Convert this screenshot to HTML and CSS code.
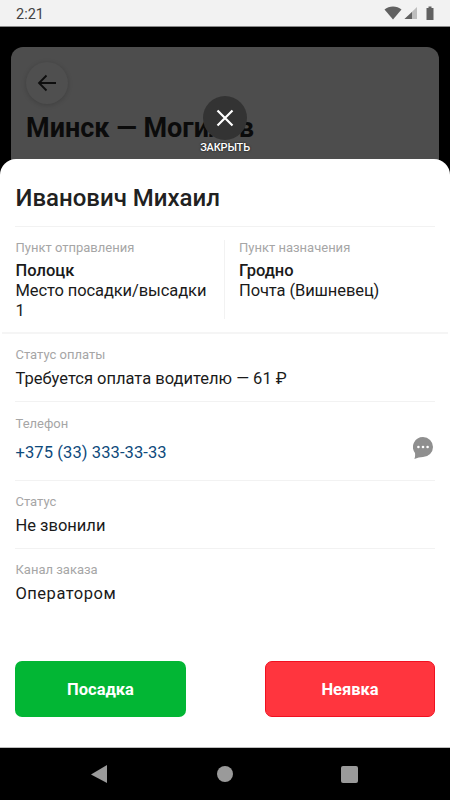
FILE: index.html
```html
<!DOCTYPE html>
<html lang="ru">
<head>
<meta charset="utf-8">
<title>Иванович Михаил</title>
<link rel="stylesheet" href="styles.css">
</head>
<body>
<div class="phone">
  <header class="status-bar">
    <span class="clock">2:21</span>
    <div class="status-icons">
      <svg class="wifi" width="18" height="14" viewBox="0 0 18 14"><path d="M0.500 3.500C2.800 1.600 5.800 0.500 9 0.500s6.200 1.100 8.500 3L9 13.500z" fill="#616161"/></svg>
      <svg class="signal" width="14" height="14" viewBox="0 0 14 14"><path d="M13 1v12H0.500z" fill="#bdbdbd"/><path d="M8 6v7H0.500L8 6z" fill="#616161"/></svg>
      <svg class="battery" width="8" height="14" viewBox="0 0 8 14"><path d="M2.500 0.500h3v1.500h2v12h-7v-12h2z" fill="#616161"/></svg>
    </div>
  </header>

  <main class="screen">
    <section class="backdrop-card">
      <button class="back-btn" aria-label="Назад">
        <svg width="24" height="24" viewBox="0 0 24 24"><path d="M21 12H4M11.500 4.500 4 12l7.500 7.500" fill="none" stroke="#0d0d0d" stroke-width="1.800"/></svg>
      </button>
      <h1 class="route">Минск — Могилёв</h1>
    </section>

    <div class="close-wrap">
      <button class="close-btn" aria-label="Закрыть">
        <svg width="22" height="22" viewBox="0 0 22 22"><path d="M3.500 3.500l15 15M18.500 3.500l-15 15" stroke="#fff" stroke-width="2.200" fill="none"/></svg>
      </button>
      <span class="close-label">ЗАКРЫТЬ</span>
    </div>

    <section class="sheet">
      <h2 class="name">Иванович Михаил</h2>

      <div class="route-block">
        <div class="route-col">
          <div class="label">Пункт отправления</div>
          <div class="value strong">Полоцк</div>
          <div class="value tight">Место посадки/высадки 1</div>
        </div>
        <div class="route-col route-col-right">
          <div class="label">Пункт назначения</div>
          <div class="value strong">Гродно</div>
          <div class="value tight">Почта (Вишневец)</div>
        </div>
      </div>

      <div class="field field-pay">
        <div class="label">Статус оплаты</div>
        <div class="value">Требуется оплата водителю — 61 ₽</div>
      </div>

      <div class="field field-phone">
        <div>
          <div class="label">Телефон</div>
          <div class="value phone-number">+375 (33) 333-33-33</div>
        </div>
        <svg class="chat" width="20" height="22" viewBox="0 0 20 22"><path d="M10 0a10 10 0 0 1 0 20c-2.800 0-5.800.7-8.600 2 .7-2 .9-3.800.6-6A10 10 0 0 1 10 0z" fill="#8f8f8f"/><circle cx="5.400" cy="10" r="1.300" fill="#fff"/><circle cx="10" cy="10" r="1.300" fill="#fff"/><circle cx="14.600" cy="10" r="1.300" fill="#fff"/></svg>
      </div>

      <div class="field field-status">
        <div class="label">Статус</div>
        <div class="value">Не звонили</div>
      </div>

      <div class="field field-channel">
        <div class="label">Канал заказа</div>
        <div class="value wide">Оператором</div>
      </div>

      <div class="actions">
        <button class="action action-ok">Посадка</button>
        <button class="action action-no">Неявка</button>
      </div>
    </section>
  </main>

  <nav class="nav-bar">
    <svg width="18" height="18" viewBox="0 0 18 18"><path d="M17 0v18L1 9.500z" fill="#9a9a9a"/></svg>
    <svg width="16" height="16" viewBox="0 0 16 16"><circle cx="8" cy="8" r="8" fill="#9a9a9a"/></svg>
    <svg width="17" height="17" viewBox="0 0 17 17"><rect width="17" height="17" rx="2" fill="#9a9a9a"/></svg>
  </nav>
</div>
</body>
</html>
```
FILE: styles.css
```css
* { box-sizing: border-box; }
html, body { margin: 0; height: 100%; }
body { font-family: Roboto, "Liberation Sans", sans-serif; background: #000; overflow: hidden; }
button { font-family: inherit; border: 0; padding: 0; }

.phone { width: 450px; height: 800px; display: flex; flex-direction: column; }

.status-bar {
  height: 27px; flex: none; background: #f2f2f2; border-bottom: 1px solid #8a8a8a;
  display: flex; align-items: center; justify-content: space-between; padding: 2px 16px 0;
}
.clock { font-size: 14.5px; color: #424242; }
.status-icons { display: flex; align-items: center; gap: 2px; margin-top: -2px; }
.status-icons .battery { margin-left: 6px; }

.screen { position: relative; flex: 1; background: #000; padding: 20px 11px 0; overflow: hidden; }

.backdrop-card {
  height: 140px; background: #4d4d4d; border-radius: 12px; padding: 15px;
}
.back-btn {
  width: 42px; height: 42px; border-radius: 50%; background: #4f4f4f;
  box-shadow: 0 1px 5px rgba(0,0,0,.18);
  display: flex; align-items: center; justify-content: center;
}
.route { margin: 7px 0 0; font-size: 27px; line-height: 34px; font-weight: 700; color: #0b0b0b; white-space: nowrap; }

.close-wrap {
  position: absolute; left: 0; right: 0; top: 69px;
  display: flex; flex-direction: column; align-items: center;
}
.close-btn {
  width: 44px; height: 44px; border-radius: 50%; background: #333;
  display: flex; align-items: center; justify-content: center;
}
.close-label {
  margin-top: 1px; font-size: 11px; line-height: 14px; font-weight: 500; color: #fff; letter-spacing: -.2px;
  text-shadow: 0 0 2px rgba(0,0,0,.9);
}

.sheet {
  position: absolute; left: 0; right: 0; top: 132px; bottom: 0;
  background: #fff; border-radius: 16px 16px 0 0; border-bottom: 1px solid #bdbdbd;
}
.name {
  margin: 0 15px; height: 68px; padding: 24px 0 0 .5px; font-size: 24px; line-height: 30px; font-weight: 500;
  color: #212121; border-bottom: 1px solid #f2f2f2;
}
.label { font-size: 13px; line-height: 16px; color: #a6a6a6; }
.value { font-size: 16.5px; line-height: 20px; color: #1a1a1a; }
.strong { font-weight: 500; }
.tight { letter-spacing: -.1px; }
.wide { letter-spacing: .5px; }

.route-block {
  display: flex; margin: 0 2px; padding: 13px 13.5px; height: 107px;
  border-bottom: 2px solid #f5f5f5;
}
.route-col { width: 210px; padding-right: 14px; border-right: 1px solid #f2f2f2; }
.route-col .label { margin-bottom: 5px; }
.route-col-right { border-right: 0; padding: 0 0 0 14px; }

.field { margin: 0 15px; border-bottom: 1px solid #f2f2f2; padding: 13px 0 0 .5px; }
.field .value { margin-top: 6px; }
.field-pay { height: 68px; }
.field-phone { height: 79px; display: flex; justify-content: space-between; align-items: flex-start; padding-top: 14px; }
.field-phone .value { margin-top: 11px; }
.phone-number { color: #0e4a7b; letter-spacing: .1px; }
.chat { margin: 21px 2.5px 0 0; }
.field-status { height: 68px; }
.field-channel { border-bottom: 0; height: 112px; }

.actions { display: flex; justify-content: space-between; padding: 0 15px; }
.action {
  height: 56px; border-radius: 7px; color: #fff; font-size: 16.5px; font-weight: 700;
}
.action-ok { width: 171px; background: #02b634; }
.action-no { width: 170px; background: #ff353e; border: 1px solid #f01020; }

.nav-bar {
  height: 52px; flex: none; background: #000; display: flex; align-items: center; padding: 0 92px 0 90px;
  justify-content: space-between;
}
```
